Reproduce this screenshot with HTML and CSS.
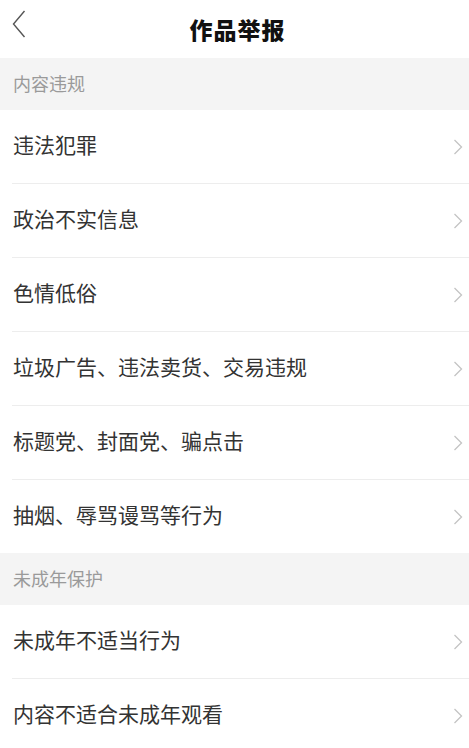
FILE: index.html
```html
<!DOCTYPE html>
<html lang="zh-CN">
<head>
  <meta charset="UTF-8">
  <meta name="viewport" content="width=device-width, initial-scale=1.0">
  <title>作品举报</title>
  <link rel="stylesheet" href="styles.css">
</head>
<body>
  <div class="topbar">
    <span class="back">
      <svg width="14" height="28" viewBox="0 0 14 28"><path d="M12.5 1 L1.5 14 L12.5 27" fill="none" stroke="#555" stroke-width="1.4"/></svg>
    </span>
    <h1 class="title">作品举报</h1>
  </div>

  <div class="group-title">内容违规</div>
  <ul class="list">
    <li class="item"><span class="label">违法犯罪</span><svg class="arrow" width="10" height="16" viewBox="0 0 10 16"><path d="M1.5 1 L8.5 8 L1.5 15" fill="none" stroke="#c4c4c4" stroke-width="1.3"/></svg></li>
    <li class="item"><span class="label">政治不实信息</span><svg class="arrow" width="10" height="16" viewBox="0 0 10 16"><path d="M1.5 1 L8.5 8 L1.5 15" fill="none" stroke="#c4c4c4" stroke-width="1.3"/></svg></li>
    <li class="item"><span class="label">色情低俗</span><svg class="arrow" width="10" height="16" viewBox="0 0 10 16"><path d="M1.5 1 L8.5 8 L1.5 15" fill="none" stroke="#c4c4c4" stroke-width="1.3"/></svg></li>
    <li class="item"><span class="label">垃圾广告、违法卖货、交易违规</span><svg class="arrow" width="10" height="16" viewBox="0 0 10 16"><path d="M1.5 1 L8.5 8 L1.5 15" fill="none" stroke="#c4c4c4" stroke-width="1.3"/></svg></li>
    <li class="item"><span class="label">标题党、封面党、骗点击</span><svg class="arrow" width="10" height="16" viewBox="0 0 10 16"><path d="M1.5 1 L8.5 8 L1.5 15" fill="none" stroke="#c4c4c4" stroke-width="1.3"/></svg></li>
    <li class="item"><span class="label">抽烟、辱骂谩骂等行为</span><svg class="arrow" width="10" height="16" viewBox="0 0 10 16"><path d="M1.5 1 L8.5 8 L1.5 15" fill="none" stroke="#c4c4c4" stroke-width="1.3"/></svg></li>
  </ul>

  <div class="group-title">未成年保护</div>
  <ul class="list">
    <li class="item"><span class="label">未成年不适当行为</span><svg class="arrow" width="10" height="16" viewBox="0 0 10 16"><path d="M1.5 1 L8.5 8 L1.5 15" fill="none" stroke="#c4c4c4" stroke-width="1.3"/></svg></li>
    <li class="item"><span class="label">内容不适合未成年观看</span><svg class="arrow" width="10" height="16" viewBox="0 0 10 16"><path d="M1.5 1 L8.5 8 L1.5 15" fill="none" stroke="#c4c4c4" stroke-width="1.3"/></svg></li>
  </ul>
</body>
</html>
```

FILE: styles.css
```css
body, ul, h1 {
    margin: 0;
    padding: 0;
}

body {
    background: #fff;
    font-family: "Noto Sans CJK SC", "Noto Sans", sans-serif;
    color: #333;
}

.topbar {
    position: relative;
    height: 58px;
    display: flex;
    align-items: center;
    justify-content: center;
}

.back {
    position: absolute;
    left: 12px;
    top: 10px;
}

.title {
    font-size: 23px;
    font-weight: 900;
    color: #111;
    letter-spacing: 1px;
    margin-left: 6px;
}

.group-title {
    height: 52px;
    line-height: 50px;
    padding: 0 13px;
    background-color: #f4f4f4;
    font-size: 18px;
    color: #9a9a9a;
}

.list {
    list-style: none;
    padding-left: 12px;
}

.item {
    height: 73px;
    display: flex;
    align-items: center;
    justify-content: space-between;
    border-bottom: 1px solid #ededed;
}
.item:last-child {
    border-bottom: none;
}

.label {
    font-size: 21px;
    padding-left: 1px;
    margin-bottom: 5px;
}

.arrow {
    margin-right: 6px;
}
```
